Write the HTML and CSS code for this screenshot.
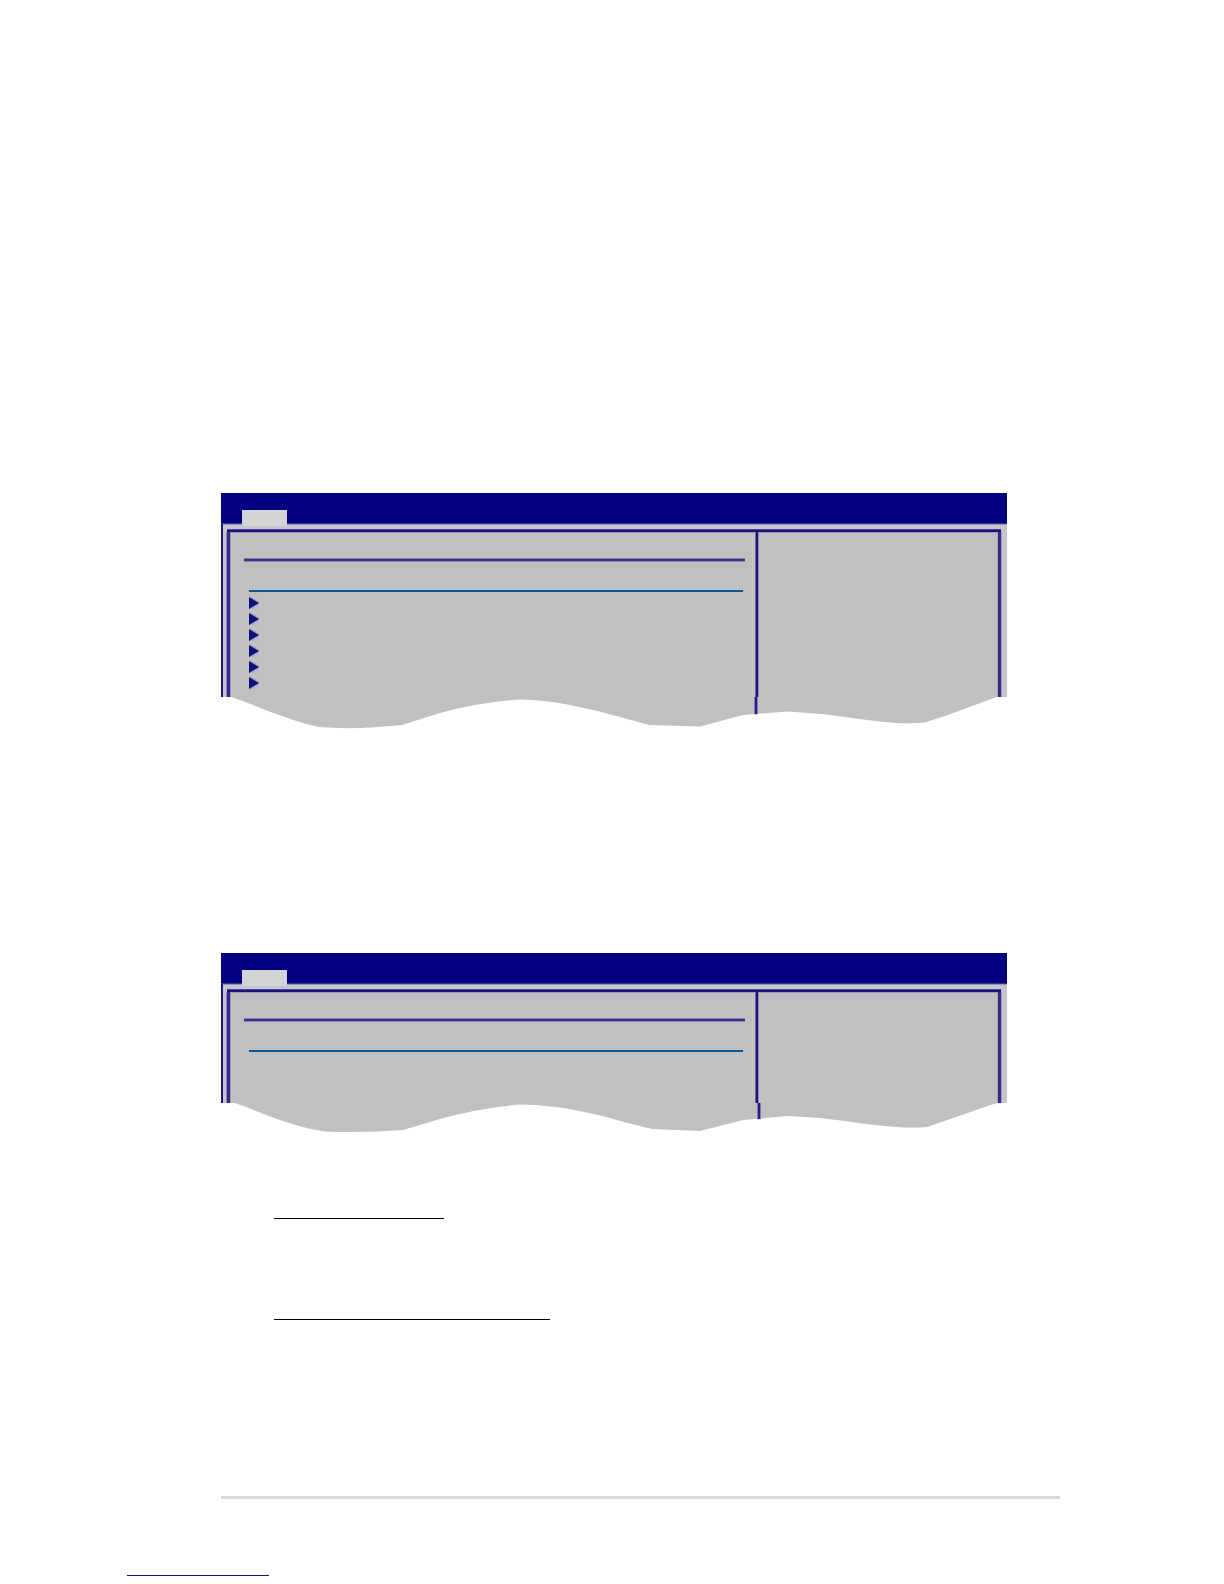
FILE: index.html
```html
<!DOCTYPE html>
<html lang="en">
<head>
    <meta charset="UTF-8">
    <meta name="viewport" content="width=device-width, initial-scale=1.0">
    <title>BIOS Setup</title>
    <link rel="stylesheet" href="styles.css">
</head>
<body>
    <main class="page">
        <section class="screen">
            <div class="menu-bar"><div class="tab"></div></div>
            <div class="frame">
                <div class="panes">
                    <div class="pane-main">
                        <hr class="title-line">
                        <hr class="item-line">
                        <ul class="items">
                            <li><svg viewBox="0 0 10 12"><path class="glow" d="M0 0H2L10 4V8L3 12H0Z"/><path d="M0 0L10 6L0 12Z"/></svg></li>
                            <li><svg viewBox="0 0 10 12"><path class="glow" d="M0 0H2L10 4V8L3 12H0Z"/><path d="M0 0L10 6L0 12Z"/></svg></li>
                            <li><svg viewBox="0 0 10 12"><path class="glow" d="M0 0H2L10 4V8L3 12H0Z"/><path d="M0 0L10 6L0 12Z"/></svg></li>
                            <li><svg viewBox="0 0 10 12"><path class="glow" d="M0 0H2L10 4V8L3 12H0Z"/><path d="M0 0L10 6L0 12Z"/></svg></li>
                            <li><svg viewBox="0 0 10 12"><path class="glow" d="M0 0H2L10 4V8L3 12H0Z"/><path d="M0 0L10 6L0 12Z"/></svg></li>
                            <li><svg viewBox="0 0 10 12"><path class="glow" d="M0 0H2L10 4V8L3 12H0Z"/><path d="M0 0L10 6L0 12Z"/></svg></li>
                        </ul>
                    </div>
                    <div class="pane-help"></div>
                </div>
            </div>
            <svg class="wave" viewBox="0 0 786 32" preserveAspectRatio="none">
                <path class="wave-fill" d="M10 0C37 9 66 23 98 30Q134 33 181 28L219 16Q259 5 299 2.500Q324 3 349 8Q374 13 399 20L428 28L479 29.500L522 18L567 14.500Q596 16 624 20C652 24 678 28 704 25.500C728 18 754 8 776 0Z"/>
                <path class="wave-edge" d="M533 0H537V17L533 17.500Z"/>
                <path class="wave-core" d="M534 0H536V17H534Z"/>
            </svg>
        </section>

        <section class="screen">
            <div class="menu-bar"><div class="tab"></div></div>
            <div class="frame">
                <div class="panes panes-short">
                    <div class="pane-main">
                        <hr class="title-line">
                        <hr class="item-line">
                    </div>
                    <div class="pane-help"></div>
                </div>
            </div>
            <svg class="wave" viewBox="0 0 786 32" preserveAspectRatio="none">
                <path class="wave-fill" d="M14 0C42 10 72 24 104 28.500Q140 30 182 27L219 16Q259 5 299 1.500Q330 2 359 8Q379 12 399 18L431 26L479 28L522 17L567 13Q596 14 624 18C652 22 680 26 706 24C730 16 754 7 776 0Z"/>
                <path class="wave-edge" d="M536 0H540V16L536 16.500Z"/>
                <path class="wave-core" d="M537 0H539V16H537Z"/>
            </svg>
        </section>

        <hr class="underline">
        <hr class="underline underline-long">
        <hr class="footer-line">
    </main>
    <footer>
        <hr class="link-line">
    </footer>
</body>
</html>
```

FILE: styles.css
```css
body {
    margin: 0;
    padding: 493px 0 8px;
    background-color: #ffffff;
    font-family: "Liberation Sans", Arial, sans-serif;
}
hr {
    margin: 0;
    border: none;
}
.page {
    margin: 0 164px 0 221px;
}
.screen {
    margin: 0 53px 224px 0;
}
.screen + .screen {
    margin-bottom: 83px;
}
.menu-bar {
    display: flex;
    align-items: flex-end;
    height: 30px;
    padding-left: 21px;
    background-color: #000080;
    border-bottom: 1px solid #3b328c;
}
.tab {
    width: 45px;
    height: 16px;
    margin-bottom: -3px;
    background-color: #d3d4d6;
}
.frame {
    padding: 5px 6px 0 4px;
    background-color: #c6c4cc;
    border-left: 2px solid #1c1674;
    box-shadow: inset 0 1px #9b95b4;
}
.frame::before {
    content: "";
    display: block;
    height: 3px;
    background: linear-gradient(#51479a 1px, #18107c 1px);
}
.panes {
    display: flex;
    height: 165px;
    background-color: #c0c0c0;
    border: solid #332b8a;
    border-width: 0 3px 0 3px;
    box-shadow: inset 1px 1px #9b97b4, inset -1px 0 #aaa5bc, 1px 0 #a39dbe, -1px 0 #8f88b4;
}
.panes-short {
    height: 111px;
}
.pane-main {
    flex: 1;
    padding: 27px 11px 0 14px;
}
.pane-help {
    width: 240px;
    border-left: 2px solid #1b137c;
    box-shadow: -1px 0 #6d669f, inset 1px 0 #8f88b4;
}
.title-line {
    height: 2px;
    background-color: #3d3089;
    box-shadow: 0 -1px #8780ab, 0 1px #8d86b0;
}
.item-line {
    height: 2px;
    margin: 29px 2px 5px 5px;
    background-color: #0b559b;
}
.items {
    display: grid;
    gap: 4px;
    margin: 0 0 0 5px;
    padding: 0;
    list-style: none;
}
.items li {
    height: 12px;
}
.items svg {
    display: block;
    width: 10px;
    height: 12px;
    fill: #17107a;
}
.items .glow {
    fill: #aaa5ce;
}
.wave {
    display: block;
    width: 100%;
    height: 32px;
}
.wave-fill {
    fill: #c0c0c0;
}
.wave-edge {
    fill: #817aae;
}
.wave-core {
    fill: #251d82;
}
.underline {
    width: 170px;
    height: 1px;
    margin: 0 0 100px 53px;
    background-color: #000000;
}
.underline-long {
    width: 276px;
    margin-bottom: 176px;
}
.footer-line {
    height: 3px;
    background-color: #d8d8d8;
}
.link-line {
    width: 142px;
    height: 1px;
    margin: 76px 0 0 127px;
    background-color: #10108a;
}
```
